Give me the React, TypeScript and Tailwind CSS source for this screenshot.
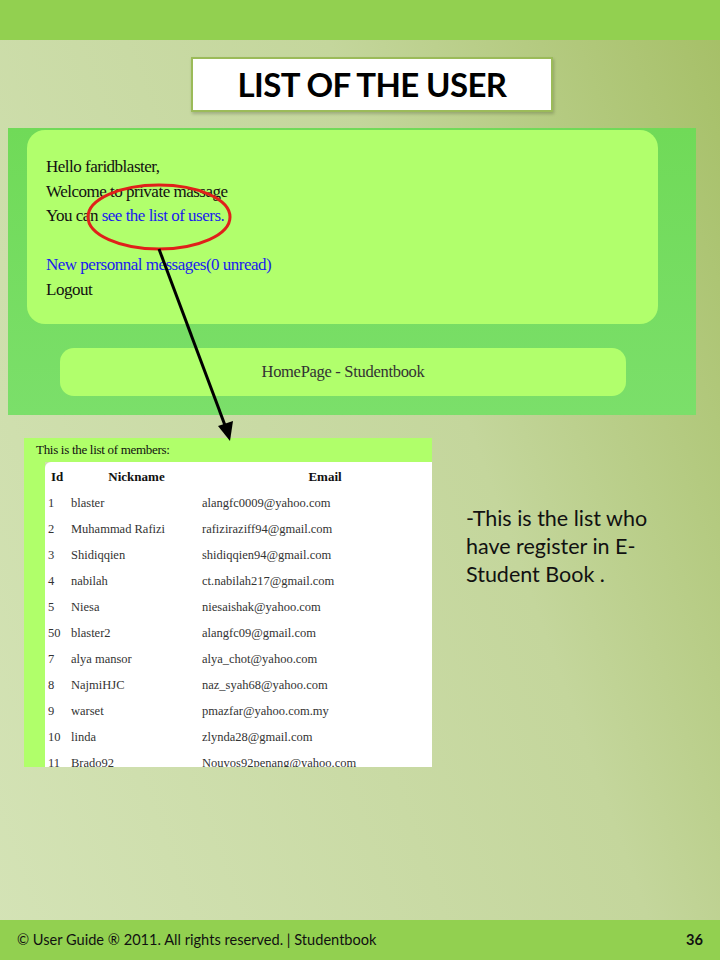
import React from 'react';

const members = [
  ['1', 'blaster', 'alangfc0009@yahoo.com'],
  ['2', 'Muhammad Rafizi', 'rafiziraziff94@gmail.com'],
  ['3', 'Shidiqqien', 'shidiqqien94@gmail.com'],
  ['4', 'nabilah', 'ct.nabilah217@gmail.com'],
  ['5', 'Niesa', 'niesaishak@yahoo.com'],
  ['50', 'blaster2', 'alangfc09@gmail.com'],
  ['7', 'alya mansor', 'alya_chot@yahoo.com'],
  ['8', 'NajmiHJC', 'naz_syah68@yahoo.com'],
  ['9', 'warset', 'pmazfar@yahoo.com.my'],
  ['10', 'linda', 'zlynda28@gmail.com'],
  ['11', 'Brado92', 'Nouvos92penang@yahoo.com'],
];

const serif = "font-['Liberation_Serif','Times_New_Roman',serif]";

const MemberTable = () => {
  return (
    <div className="flex h-[329px] w-[408px] flex-col overflow-hidden">
      <div className={`flex h-[24px] shrink-0 items-center bg-[#b0ff6a] pl-[12px] text-[13px] tracking-[-0.3px] text-[#111] ${serif}`}>
        This is the list of members:
      </div>
      <div className="flex min-h-0 flex-1">
        <div className="w-[21px] shrink-0 bg-[#b0ff6a]" />
        <div className={`min-w-0 flex-1 overflow-hidden rounded-tl-[6px] bg-white pt-[2px] text-[12.5px] ${serif}`}>
          <div className="flex h-[26px] items-center text-[13px] font-bold text-[#111]">
            <div className="w-[26px] shrink-0 pl-[6px]">Id</div>
            <div className="w-[131px] shrink-0 text-center">Nickname</div>
            <div className="w-[246px] shrink-0 text-center">Email</div>
          </div>
          {members.map(([id, nick, email]) => (
            <div key={id} className="flex h-[26px] items-center text-[#333]">
              <div className="w-[26px] shrink-0 pl-[3px]">{id}</div>
              <div className="w-[131px] shrink-0">{nick}</div>
              <div className="w-[246px] shrink-0 whitespace-nowrap">{email}</div>
            </div>
          ))}
        </div>
      </div>
    </div>
  );
};

const App = () => {
  return (
    <div className="relative flex h-[960px] w-[720px] flex-col overflow-hidden bg-[linear-gradient(250deg,#a5bf66_0%,#c4d69c_38%,#d4e3b6_100%)] font-['Lato','Open_Sans',sans-serif]">
      <div className="h-10 shrink-0 bg-[#92d050]" />

      <div className="flex flex-1 flex-col">
        <div className="ml-[191px] mt-[17px] flex h-[55px] w-[362px] items-center justify-center border-2 border-[#9bbb59] bg-white shadow-[1px_2px_3px_rgba(0,0,0,0.2)]">
          <span className="text-[33px] font-bold tracking-[-0.6px] text-black">LIST OF THE USER</span>
        </div>

        <div className="ml-2 mt-4 flex h-[287px] w-[688px] flex-col bg-[linear-gradient(180deg,#70da58,#7bdf6a)]">
          <div className={`ml-[19px] mt-[2px] h-[194px] w-[631px] rounded-[18px] bg-[#b1ff6c] pl-[19px] pt-[25px] text-[17px] leading-[24.5px] tracking-[-0.5px] text-[#111] ${serif}`}>
            <div>Hello faridblaster,</div>
            <div>Welcome to private massage</div>
            <div>
              You can <span className="text-[#1a1aee]">see the list of users.</span>
            </div>
            <div>&nbsp;</div>
            <div className="text-[#1a1aee]">New personnal messages(0 unread)</div>
            <div>Logout</div>
          </div>
          <div className={`ml-[52px] mt-[24px] flex h-[48px] w-[566px] items-center justify-center rounded-[14px] bg-[#b1ff6c] text-[16.5px] tracking-[-0.3px] text-[#333] ${serif}`}>
            HomePage - Studentbook
          </div>
        </div>

        <div className="mt-[23px] flex">
          <div className="ml-[24px]">
            <MemberTable />
          </div>
          <div className="ml-[34px] mt-[66px] text-[21.5px] leading-[28px] text-[#111]">
            <div>-This is the list who</div>
            <div>have register in E-</div>
            <div>Student Book .</div>
          </div>
        </div>
      </div>

      <div className="flex h-10 shrink-0 items-center justify-between bg-[#92d050] pl-[17px] pr-[17px] text-[14.6px] text-[#111]">
        <span>© User Guide ® 2011. All rights reserved. | Studentbook</span>
        <span className="font-bold">36</span>
      </div>

      {/* callout drawn over the screenshots */}
      <svg className="pointer-events-none absolute left-0 top-0" width="720" height="960" viewBox="0 0 720 960">
        <ellipse cx="159" cy="217" rx="71" ry="32" fill="none" stroke="#e0201a" strokeWidth="3" />
        <line x1="159" y1="249" x2="226" y2="428" stroke="#000" strokeWidth="3" />
        <polygon points="230,441 218,426 233,421" fill="#000" />
      </svg>
    </div>
  );
};

export default App;
